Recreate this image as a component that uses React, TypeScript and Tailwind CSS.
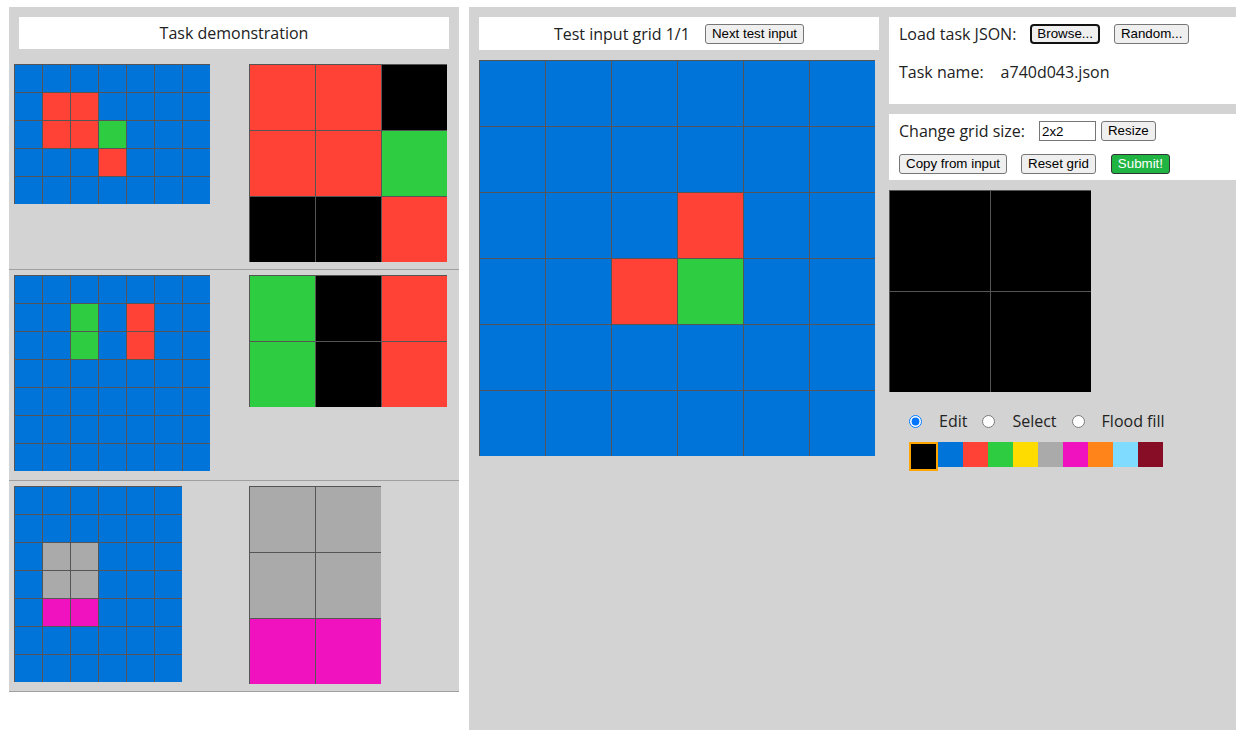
import React from "react";

const C: Record<number, string> = {
  0: "bg-[#000000]",
  1: "bg-[#0074D9]",
  2: "bg-[#FF4136]",
  3: "bg-[#2ECC40]",
  4: "bg-[#FFDC00]",
  5: "bg-[#AAAAAA]",
  6: "bg-[#F012BE]",
  7: "bg-[#FF851B]",
  8: "bg-[#7FDBFF]",
  9: "bg-[#870C25]",
};

function Grid({ data, cell }: { data: number[][]; cell: string }) {
  return (
    <div className="flex flex-col shrink-0">
      {data.map((row, i) => (
        <div key={i} className="flex">
          {row.map((v, j) => (
            <div key={j} className={`${cell} ${C[v]} border-l border-t border-[#555555]`} />
          ))}
        </div>
      ))}
    </div>
  );
}

const rows = (n: number, w: number, v = 1) => Array.from({ length: n }, () => Array.from({ length: w }, () => v));

const in1 = rows(5, 7);
in1[1][1] = 2; in1[1][2] = 2; in1[2][1] = 2; in1[2][2] = 2; in1[2][3] = 3; in1[3][3] = 2;
const out1 = [[2, 2, 0], [2, 2, 3], [0, 0, 2]];

const in2 = rows(7, 7);
in2[1][2] = 3; in2[2][2] = 3; in2[1][4] = 2; in2[2][4] = 2;
const out2 = [[3, 0, 2], [3, 0, 2]];

const in3 = rows(7, 6);
in3[2][1] = 5; in3[2][2] = 5; in3[3][1] = 5; in3[3][2] = 5; in3[4][1] = 6; in3[4][2] = 6;
const out3 = [[5, 5], [5, 5], [6, 6]];

const test = rows(6, 6);
test[2][3] = 2; test[3][2] = 2; test[3][3] = 3;

const btn =
  "h-[20px] px-[6px] border border-[#767676] bg-[#efefef] rounded-[3px] text-[13.333px] leading-none text-black font-['Liberation_Sans',Arial,sans-serif] flex items-center shrink-0";

export default function App() {
  return (
    <div className="min-h-[730px] bg-white pt-[7px] flex items-stretch font-['Open_Sans',sans-serif] text-[16px] text-[#222222] overflow-hidden">
      {/* Left panel */}
      <div className="ml-[9px] w-[450px] shrink-0 bg-[#d3d3d3] self-start">
        <div className="pt-[10px] px-[10px]">
          <div className="h-[32px] bg-white flex items-center justify-center">Task demonstration</div>
        </div>
        <div className="h-[221px] pt-[15px] pl-[5px] flex items-start border-b border-[#a0a0a0]">
          <div className="w-[235px] shrink-0">
            <Grid data={in1} cell="w-[28px] h-[28px]" />
          </div>
          <Grid data={out1} cell="w-[66px] h-[66px]" />
        </div>
        <div className="h-[211px] pt-[5px] pl-[5px] flex items-start border-b border-[#a0a0a0]">
          <div className="w-[235px] shrink-0">
            <Grid data={in2} cell="w-[28px] h-[28px]" />
          </div>
          <Grid data={out2} cell="w-[66px] h-[66px]" />
        </div>
        <div className="h-[211px] pt-[5px] pl-[5px] flex items-start border-b border-[#a0a0a0]">
          <div className="w-[235px] shrink-0">
            <Grid data={in3} cell="w-[28px] h-[28px]" />
          </div>
          <Grid data={out3} cell="w-[66px] h-[66px]" />
        </div>
      </div>

      {/* Right container */}
      <div className="ml-[10px] flex-1 bg-[#d3d3d3] flex items-start">
        {/* Middle column */}
        <div className="w-[420px] shrink-0 pl-[10px] pt-[10px]">
          <div className="w-[400px] h-[33px] bg-white flex items-center justify-center">
            <span>Test input grid 1/1</span>
            <button className={`${btn} ml-[15px]`}>Next test input</button>
          </div>
          <div className="mt-[10px]">
            <Grid data={test} cell="w-[66px] h-[66px]" />
          </div>
        </div>

        {/* Right column */}
        <div className="flex-1 pt-[10px]">
          <div className="h-[87px] bg-white pl-[10px] pt-[7px]">
            <div className="h-[20px] flex items-center">
              <span>Load task JSON:</span>
              <button className="h-[20px] px-[5px] ml-[14px] border-2 border-[#111111] bg-[#efefef] rounded-[4px] text-[13.333px] leading-none text-black font-['Liberation_Sans',Arial,sans-serif] flex items-center">
                Browse...
              </button>
              <button className={`${btn} ml-[14px]`}>Random...</button>
            </div>
            <div className="h-[20px] mt-[18px] flex items-center">
              <span>Task name:</span>
              <span className="ml-[17px]">a740d043.json</span>
            </div>
          </div>
          <div className="h-[66px] mt-[10px] bg-white pl-[10px] pt-[7px]">
            <div className="h-[20px] flex items-center">
              <span>Change grid size:</span>
              <input
                readOnly
                value="2x2"
                className="ml-[14px] w-[57px] h-[20px] border border-[#767676] bg-white px-[2px] text-[13.333px] text-black font-['Liberation_Sans',Arial,sans-serif] outline-none"
              />
              <button className={`${btn} ml-[5px]`}>Resize</button>
            </div>
            <div className="h-[20px] mt-[13px] flex items-center">
              <button className={btn}>Copy from input</button>
              <button className={`${btn} ml-[14px]`}>Reset grid</button>
              <button className="h-[20px] px-[6px] ml-[15px] border border-[#333333] bg-[#20b443] rounded-[3px] text-[13.333px] leading-none text-white font-['Liberation_Sans',Arial,sans-serif] flex items-center">
                Submit!
              </button>
            </div>
          </div>
          <div className="mt-[10px]">
            <Grid data={[[0, 0], [0, 0]]} cell="w-[101px] h-[101px]" />
          </div>
          <div className="mt-[19px] h-[20px] pl-[20px] flex items-center">
            <input type="radio" name="mode" defaultChecked className="m-0 w-[13px] h-[13px]" />
            <span className="ml-[17px]">Edit</span>
            <input type="radio" name="mode" className="m-0 ml-[15px] w-[13px] h-[13px]" />
            <span className="ml-[17px]">Select</span>
            <input type="radio" name="mode" className="m-0 ml-[15px] w-[13px] h-[13px]" />
            <span className="ml-[17px]">Flood fill</span>
          </div>
          <div className="mt-[11px] pl-[20px] flex items-start">
            <div className="w-[29px] h-[29px] border-2 border-[#FFA500] bg-[#000000]" />
            {[1, 2, 3, 4, 5, 6, 7, 8, 9].map((v) => (
              <div key={v} className={`w-[25px] h-[25px] ${C[v]}`} />
            ))}
          </div>
        </div>
      </div>
    </div>
  );
}
